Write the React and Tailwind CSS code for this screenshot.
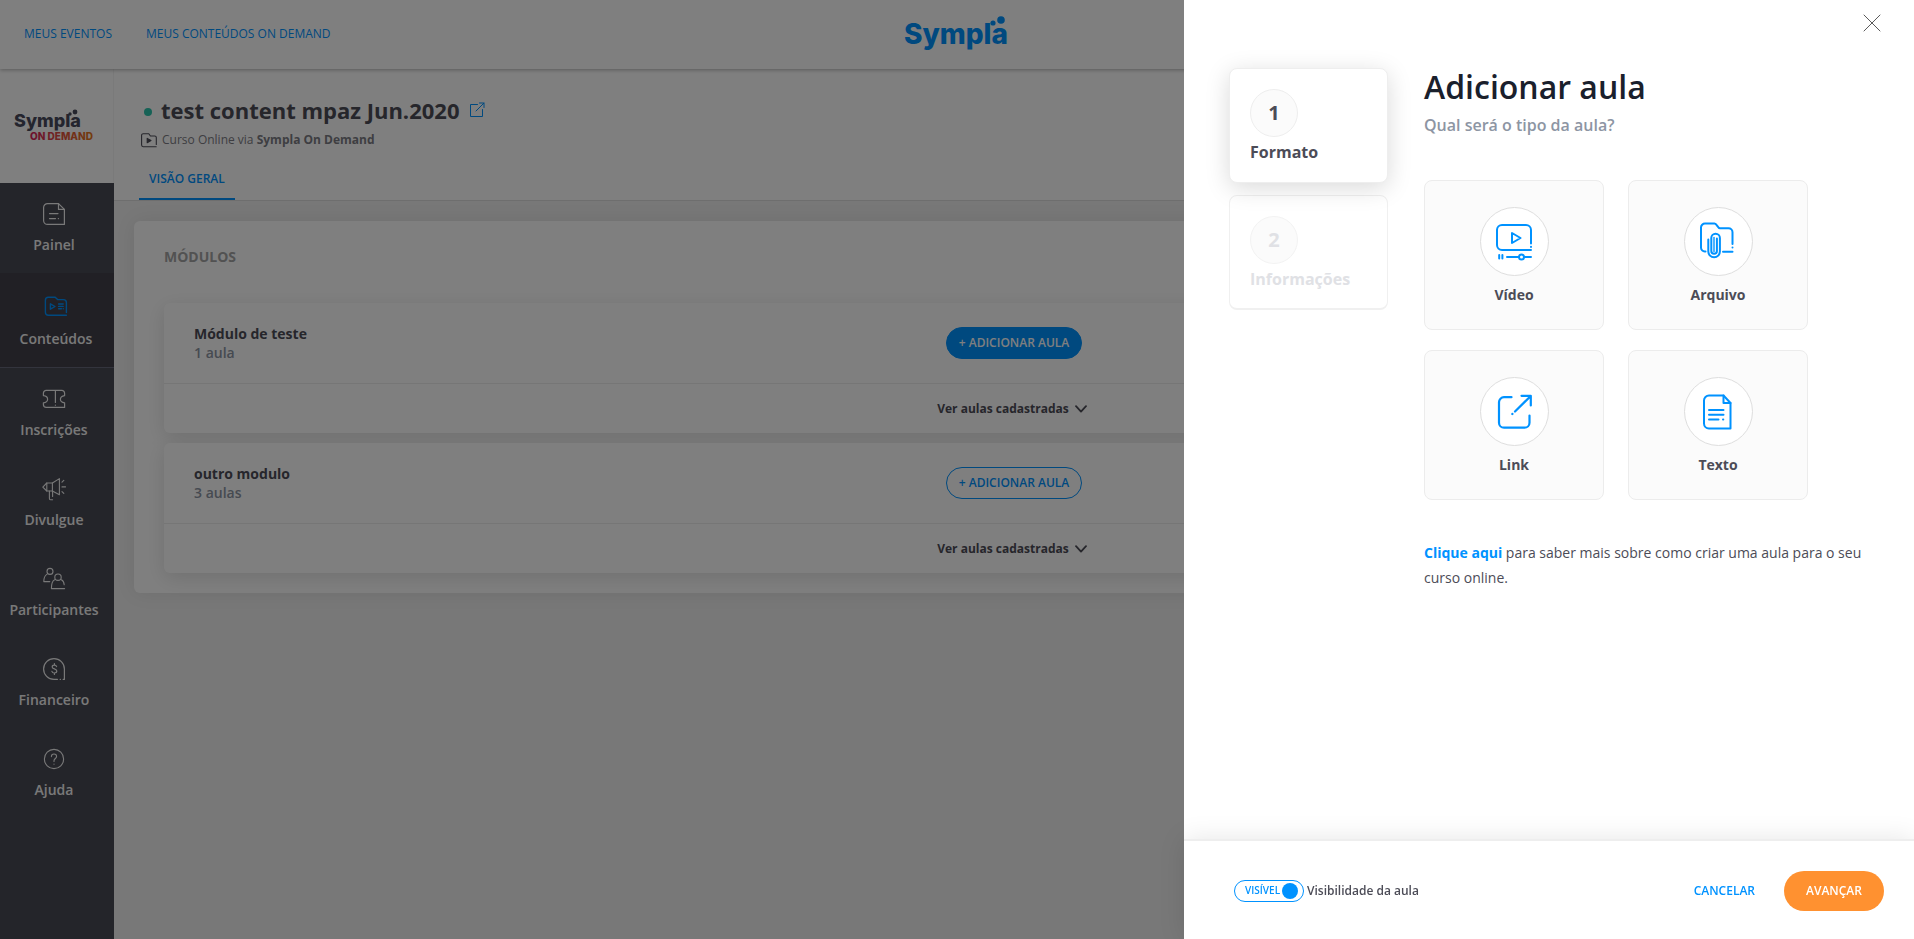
import React, { useState } from 'react';

const svgProps = {
    fill: 'none',
    stroke: 'currentColor',
    strokeLinecap: 'round',
    strokeLinejoin: 'round',
    'aria-hidden': true,
};

/* ─── Sidebar icons ─── */
const PanelIcon = () => (
    <svg {...svgProps} viewBox="0 0 24 24" className="h-6 w-6" strokeWidth="1.2">
        <path d="M16.5 1.6H5.6a4 4 0 0 0-4 4v12.8a4 4 0 0 0 4 4h16.8V7.4z" />
        <path d="M16.5 1.6v5.8h5.9M7.5 11.6h8.5M7.5 16.6h6M16.3 16.6h.2" />
    </svg>
);

const ContentIcon = () => (
    <svg {...svgProps} viewBox="0 0 24 24" className="h-6 w-6" strokeWidth="1.4">
        <path d="M22.4 18.6V8.6a3 3 0 0 0-3-3h-5.8l-2.4-2.4H4.4a3 3 0 0 0-3 3v12a3 3 0 0 0 3 3h18" />
        <path d="M6.4 9.8v5.4l4.6-2.7zM14.6 10h4.6M14.6 12.4h4.6M14.6 14.8h2.8M19.2 14.8h.1" />
    </svg>
);

const TicketIcon = () => (
    <svg {...svgProps} viewBox="0 0 24 24" className="h-6 w-6" strokeWidth="1.2">
        <path d="M4.2 3.4h15.6a2.8 2.8 0 0 1 2.8 2.8v2.4c-5.6.8-5.6 6.6 0 7.2v4.6H4.2a2.8 2.8 0 0 1-2.8-2.8v-1.8c5.6-.8 5.6-6.6 0-7.2V6.2a2.8 2.8 0 0 1 2.8-2.8z" />
        <path d="M13.4 3.6v11.8M13.4 18v.2" />
    </svg>
);

const MegaphoneIcon = () => (
    <svg {...svgProps} viewBox="0 0 24 24" className="h-6 w-6" strokeWidth="1.1">
        <path d="M17.4 1.6v16.2L10.4 14H4.8L.8 10.2l4-4.200h5.6z" />
        <path d="M10.4 6v8M4.8 6v8M7.4 14v7.4c0 1 .6 1.4 1.4 1.4h1.8M10.6 14v5.4M20 5.200l1.8-1.8M20 14.6l1.8 1.8M20 9.9h3.6" />
    </svg>
);

const PeopleIcon = () => (
    <svg {...svgProps} viewBox="0 0 24 24" className="h-6 w-6" strokeWidth="1.1">
        <circle cx="8" cy="4.4" r="3" />
        <circle cx="16" cy="10.2" r="3.2" />
        <path d="M4.8 7.4c-2 1.2-3 3.2-3 7.2h6" />
        <path d="M12.6 12.8c-2.200 1-3.200 2.600-3.200 8.800h13.200M19.4 12.8c1.6.8 2.6 2.4 2.8 5" />
    </svg>
);

const MoneyIcon = () => (
    <svg {...svgProps} viewBox="0 0 24 24" className="h-6 w-6" strokeWidth="1.2">
        <path d="M15.4 22.4H12A10.4 10.4 0 1 1 22.4 12v10.4h-1.2M18.2 22.4h.2" />
        <path d="M14.6 9.6c-.3-1-1.2-1.5-2.2-1.5-1.2 0-2.2.6-2.2 1.8 0 2.6 4.6 1.4 4.6 4.2 0 1.2-1 1.9-2.4 1.9-1.2 0-2.200-.6-2.500-1.700M12.4 6.6v1.5M12.4 16v1.5" />
    </svg>
);

const HelpIcon = () => (
    <svg {...svgProps} viewBox="0 0 24 24" className="h-6 w-6" strokeWidth="1.1">
        <circle cx="12" cy="12" r="9.6" />
        <path d="M9.4 9.6c0-1.6 1.1-2.6 2.6-2.6s2.6 1 2.6 2.4c0 2-2.6 2.2-2.6 4.4v.6M12 17v.2" />
    </svg>
);

/* ─── Lesson type icons ─── */
const VideoIcon = () => (
    <svg {...svgProps} viewBox="0 0 40 40" className="h-10 w-10" strokeWidth="2">
        <path d="M37 21.5V8a5 5 0 0 0-5-5H8a5 5 0 0 0-5 5v15a5 5 0 0 0 5 5h29M37 24.8v.1" />
        <path d="M18 11v10l8.5-5zM5.200 33v3.6M8.4 33v3.6M13 35h12M30.5 35H37" />
        <circle cx="27.5" cy="35" r="2.5" />
    </svg>
);

const FileIcon = () => (
    <svg {...svgProps} viewBox="0 0 40 40" className="h-10 w-10" strokeWidth="2">
        <path d="M7.5 29.5h-.7A3.8 3.8 0 0 1 3 25.7V5.5a4 4 0 0 1 4-4h9.5c2.5 0 3 4.8 5.5 4.8h8.5a4 4 0 0 1 4 4V22M34.5 25.5v.1M25 29.8h9.5" />
        <path d="M10.3 17.5v12a5.8 5.8 0 0 0 11.6 0V16a4.3 4.3 0 0 0-8.6 0v13a2.8 2.8 0 0 0 5.6 0V16.5" />
        <path d="M16 15.5v14" strokeWidth="1.4" />
    </svg>
);

const LinkIcon = () => (
    <svg {...svgProps} viewBox="0 0 40 40" className="h-10 w-10" strokeWidth="2.2">
        <path d="M17.5 5.2H10a5 5 0 0 0-5 5v20.5a5 5 0 0 0 5 5h20.5a5 5 0 0 0 5-5V23.5" />
        <path d="M27.5 3.8h9.3v9.7M36.5 4.2 21 19.5M18.3 22l.1-.1" />
    </svg>
);

const TextIcon = () => (
    <svg {...svgProps} viewBox="0 0 40 40" className="h-10 w-10" strokeWidth="2">
        <path d="M25.5 3.5H11a5 5 0 0 0-5 5v23a5 5 0 0 0 5 5h21.5V11z" />
        <path d="M25.5 3.5V11h7M11 18h14.5M11 22.7h14.5M11 27.4h9.5M25 27.4h.3" />
    </svg>
);

const ExternalIcon = () => (
    <svg {...svgProps} viewBox="0 0 16 16" className="h-4 w-4" strokeWidth="1">
        <path d="M8.5 2.5h-7v12h12v-7M10.5 1h4.5v4.5M15 1 7 9" />
    </svg>
);

const FolderPlayIcon = () => (
    <svg {...svgProps} viewBox="0 0 16 16" className="h-4 w-4" strokeWidth="1.1">
        <path d="M15.3 12.5V5.6a1.6 1.6 0 0 0-1.6-1.6H9.4L7.8 1.7H2.2A1.6 1.6 0 0 0 .6 3.3v9.8a1.6 1.6 0 0 0 1.6 1.6h13" />
        <path d="M6.2 6.4v4.4L10 8.6z" fill="currentColor" />
    </svg>
);

const ChevronDown = () => (
    <svg {...svgProps} viewBox="0 0 12 8" className="h-2 w-3" strokeWidth="1.8">
        <path d="M1 1.2 6 6.6l5-5.4" />
    </svg>
);

const menu = [
    { label: 'Inscrições', icon: TicketIcon },
    { label: 'Divulgue', icon: MegaphoneIcon },
    { label: 'Participantes', icon: PeopleIcon },
    { label: 'Financeiro', icon: MoneyIcon },
    { label: 'Ajuda', icon: HelpIcon },
];

const modules = [
    { title: 'Módulo de teste', count: '1 aula', active: true },
    { title: 'outro modulo', count: '3 aulas', active: false },
];

const lessonTypes = [
    { label: 'Vídeo', icon: VideoIcon },
    { label: 'Arquivo', icon: FileIcon },
    { label: 'Link', icon: LinkIcon },
    { label: 'Texto', icon: TextIcon },
];

function MenuItem({ label, icon: Icon }) {
    return (
        <a href="#" className="flex h-[90px] flex-col items-center gap-2 pt-[19px] pr-1.5 text-sm font-semibold text-[#f2f2f2]">
            <Icon />
            <span className="leading-[22px]">{label}</span>
        </a>
    );
}

function Sidebar() {
    return (
        <aside className="flex w-[114px] shrink-0 flex-col bg-[#484a54]">
            <div className="flex h-[114px] flex-col border-r border-[#f4f4f4] bg-white pt-[35px] pl-[14px]">
                <svg viewBox="0 0 84 42" className="h-[42px] w-[84px]" role="img" aria-label="Sympla On Demand">
                    <defs>
                        <linearGradient id="onDemand" x1="0" x2="1">
                            <stop offset="0" stopColor="#d8205e" />
                            <stop offset="0.5" stopColor="#e2503f" />
                            <stop offset="1" stopColor="#e87a1c" />
                        </linearGradient>
                    </defs>
                    <text x="0" y="23" fontSize="18" className="font-[Inter,sans-serif] font-extrabold" fill="#484a5c">Sympla</text>
                    <circle cx="56" cy="10" r="1.7" fill="#484a5c" />
                    <circle cx="61" cy="8" r="2.4" fill="#484a5c" />
                    <text x="16" y="36" fontSize="10" className="font-[Inter,sans-serif] font-extrabold" fill="url(#onDemand)">ON DEMAND</text>
                </svg>
            </div>
            <nav className="flex flex-col" aria-label="Menu principal">
                <MenuItem label="Painel" icon={PanelIcon} />
                <a href="#" className="flex h-[95px] flex-col items-center gap-2.5 border-b border-[#66687a] bg-[#42404a] pt-[21px] pr-0.5 text-sm font-semibold text-[#f2f2f2]">
                    <span className="text-[#0092ff]">
                        <ContentIcon />
                    </span>
                    <span className="leading-[22px]">Conteúdos</span>
                </a>
                {menu.map((item) => (
                    <MenuItem key={item.label} {...item} />
                ))}
            </nav>
        </aside>
    );
}

function ModuleCard({ title, count, active }) {
    return (
        <article className="rounded-md bg-white shadow-[0_5px_20px_rgba(0,0,0,0.12)]">
            <div className="grid h-[81px] grid-cols-[1fr_auto_1fr] items-center border-b border-[#ececec] px-[30px]">
                <div className="text-sm leading-[19px]">
                    <h3 className="font-bold text-[#4c4c57]">{title}</h3>
                    <p className="font-semibold text-[#8d95a3]">{count}</p>
                </div>
                <button
                    type="button"
                    className={
                        active
                            ? 'h-8 w-[136px] rounded-full border border-[#0092ff] bg-[#0092ff] text-xs font-semibold text-white'
                            : 'h-8 w-[136px] rounded-full border border-[#0092ff] bg-white text-xs font-semibold text-[#0092ff]'
                    }
                >
                    + ADICIONAR AULA
                </button>
            </div>
            <button type="button" className="flex h-[49px] w-full items-center justify-center gap-1.5 pr-1 text-xs font-bold text-[#4c4c57]">
                Ver aulas cadastradas
                <ChevronDown />
            </button>
        </article>
    );
}

function LessonDrawer() {
    const [visible, setVisible] = useState(true);

    return (
        <section role="dialog" aria-label="Adicionar aula" className="fixed inset-y-0 right-0 flex w-[730px] max-w-full flex-col bg-white">
            <button type="button" aria-label="Fechar" className="absolute top-3 right-[31px] text-[#5a5a5a]">
                <svg {...svgProps} viewBox="0 0 22 22" className="h-[22px] w-[22px]" strokeWidth="1">
                    <path d="M3 3l16 16M19 3 3 19" />
                </svg>
            </button>

            <div className="flex flex-1 gap-9 overflow-hidden pt-[68px] pr-[30px] pl-[45px]">
                <ol className="flex w-[159px] shrink-0 flex-col gap-3">
                    <li className="relative z-10 h-[115px] rounded-lg border border-[#eeeeee] bg-white px-5 pt-5 shadow-[0_5px_25px_rgba(0,0,0,0.15)]">
                        <div className="flex h-12 w-12 items-center justify-center rounded-full border border-[#eeeeee] bg-[#fbfbfb] text-xl font-bold text-[#4c4c57]">1</div>
                        <p className="mt-[3px] text-base font-bold text-[#4c4c57]">Formato</p>
                    </li>
                    <li className="h-[115px] rounded-lg border border-b-2 border-[#f0f0f0] bg-white px-5 pt-5">
                        <div className="flex h-12 w-12 items-center justify-center rounded-full border border-[#f3f3f3] bg-[#fbfbfb] text-xl font-bold text-[#e0e1e5]">2</div>
                        <p className="mt-[3px] text-base font-bold text-[#e0e1e5]">Informações</p>
                    </li>
                </ol>

                <div className="flex-1 pt-px">
                    <h2 className="text-[32px] leading-9 font-semibold text-[#1a202c]">Adicionar aula</h2>
                    <p className="mt-2 text-base leading-6 font-semibold text-[#8d95a3]">Qual será o tipo da aula?</p>

                    <div className="mt-[43px] grid w-[384px] grid-cols-2 gap-x-6 gap-y-5">
                        {lessonTypes.map((type) => (
                            <button
                                key={type.label}
                                type="button"
                                className="flex h-[150px] flex-col items-center rounded-lg border border-[#ececec] bg-[#fbfbfb] pt-[26px] text-sm font-bold text-[#4c4c57]"
                            >
                                <span className="flex h-[69px] w-[69px] items-center justify-center rounded-full border border-[#dedede] bg-white text-[#0092ff]">
                                    <type.icon />
                                </span>
                                <span className="mt-[9px]">{type.label}</span>
                            </button>
                        ))}
                    </div>

                    <p className="mt-10 text-sm leading-[25px] text-[#4c4c57]">
                        <a href="#" className="font-bold text-[#0092ff]">Clique aqui</a> para saber mais sobre como criar uma aula para o seu curso online.
                    </p>
                </div>
            </div>

            <footer className="flex h-[100px] items-center justify-between border-t-2 border-[#eeeeee] bg-white pt-0.5 pr-[30px] pl-[50px] shadow-[0_0_25px_rgba(0,0,0,0.1)]">
                <label className="flex cursor-pointer items-center gap-[3px] text-xs font-semibold text-[#4c4c57]">
                    <input type="checkbox" className="sr-only" checked={visible} onChange={(e) => setVisible(e.target.checked)} />
                    <span className="flex h-[22px] w-[70px] items-center justify-between rounded-full border border-[#0092ff] pr-[5px] pl-2.5 text-[10px] text-[#0092ff]">
                        VISÍVEL
                        <span className="h-4 w-4 rounded-full bg-[#0092ff]" />
                    </span>
                    Visibilidade da aula
                </label>
                <div className="flex items-center gap-[29px] text-xs font-semibold">
                    <button type="button" className="text-[#0092ff]">CANCELAR</button>
                    <button type="button" className="h-10 w-[100px] rounded-full bg-[#ff9130] text-white">AVANÇAR</button>
                </div>
            </footer>
        </section>
    );
}

export default function App() {
    return (
        <div className="flex min-h-screen flex-col bg-[#f0f0f0] font-['Open_Sans',sans-serif]">
            {/* ─── Header ─── */}
            <header className="relative z-10 grid h-[69px] grid-cols-[1fr_auto_1fr] items-center bg-white px-6 pb-0.5 shadow-[0_1px_4px_rgba(0,0,0,0.3)]">
                <nav className="flex gap-[34px] text-xs text-[#0092ff]">
                    <a href="#">MEUS EVENTOS</a>
                    <a href="#">MEUS CONTEÚDOS ON DEMAND</a>
                </nav>
                <svg viewBox="0 0 106 40" className="h-10 w-[106px]" role="img" aria-label="Sympla" fill="#0092ff">
                    <text x="0" y="30" fontSize="28" className="font-[Inter,sans-serif] font-extrabold">Sympla</text>
                    <circle cx="89" cy="9" r="2.6" />
                    <circle cx="97" cy="6" r="3.8" />
                </svg>
            </header>

            <div className="flex flex-1">
                <Sidebar />

                <main className="min-w-0 flex-1">
                    <div className="border-b border-[#dcdcdc] bg-white pt-[23px] pl-[25px]">
                        <div className="flex h-9 items-center pl-[5px]">
                            <span className="mt-1 mr-[9px] h-2 w-2 rounded-full bg-[#2cc4ac]" />
                            <h1 className="text-[22px] font-bold text-[#4c4c57]">test content mpaz Jun.2020</h1>
                            <a href="#" aria-label="Abrir página" className="ml-2.5 text-[#0092ff]">
                                <ExternalIcon />
                            </a>
                        </div>
                        <p className="mt-px flex h-[22px] items-center gap-[5px] pl-0.5 text-xs text-[#7c7c84]">
                            <span className="text-[#4c4c57]">
                                <FolderPlayIcon />
                            </span>
                            <span>
                                Curso Online via <strong className="font-bold">Sympla On Demand</strong>
                            </span>
                        </p>
                        <nav className="mt-2 flex">
                            <a href="#" className="flex h-[41px] items-center border-b-2 border-[#0092ff] px-2.5 text-xs font-semibold text-[#0092ff]">
                                VISÃO GERAL
                            </a>
                        </nav>
                    </div>

                    <section className="m-5 rounded-md bg-white px-[30px] pt-[26px] pb-5 shadow-[0_0_20px_rgba(0,0,0,0.08)]">
                        <h2 className="text-sm font-bold text-[#a4a4a4]">MÓDULOS</h2>
                        <div className="mt-9 flex flex-col gap-2.5">
                            {modules.map((m) => (
                                <ModuleCard key={m.title} {...m} />
                            ))}
                        </div>
                    </section>
                </main>
            </div>

            {/* ─── Modal ─── */}
            <div className="fixed inset-0 z-20 bg-black/50">
                <LessonDrawer />
            </div>
        </div>
    );
}
